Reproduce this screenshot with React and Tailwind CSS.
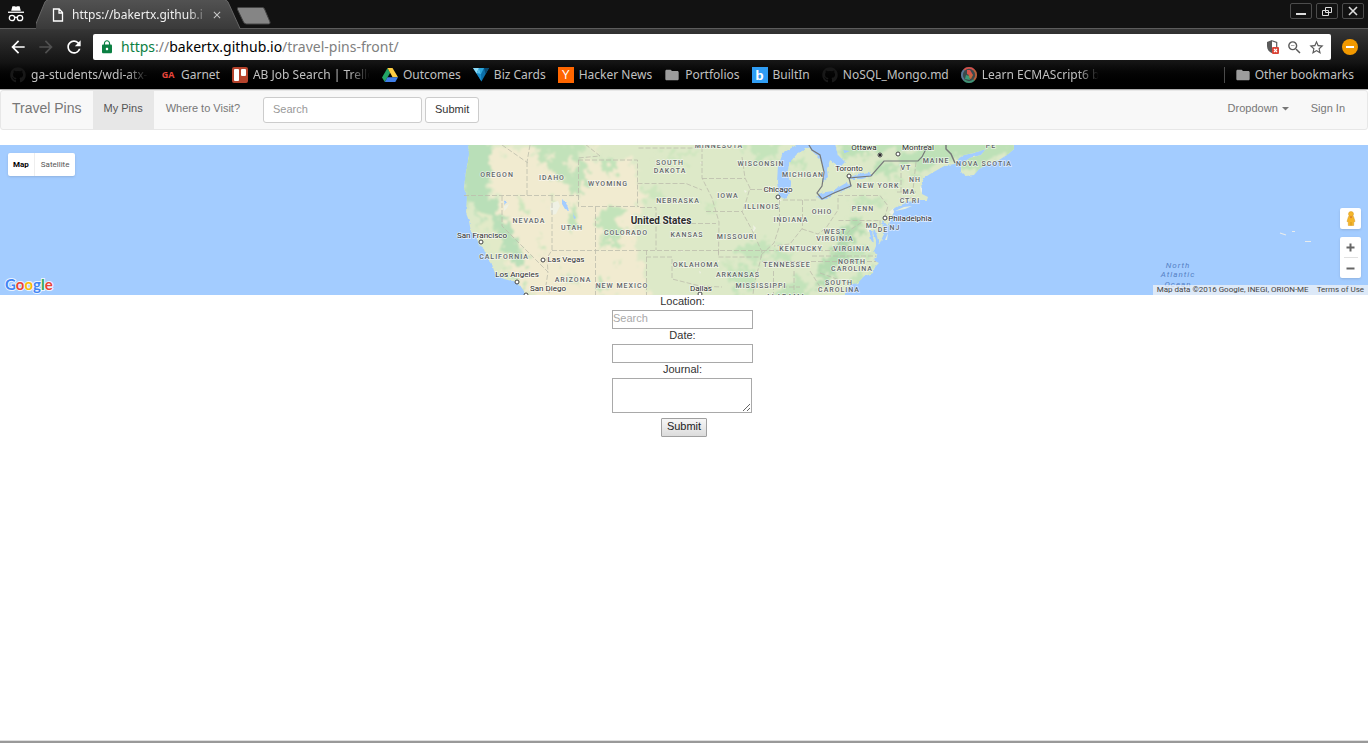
import React from "react";
import {
  MdArrowBack,
  MdArrowForward,
  MdRefresh,
  MdLock,
  MdStarBorder,
  MdZoomOut,
  MdFolder,
  MdClose,
} from "react-icons/md";
import { FaGithub } from "react-icons/fa";

/* ---------- browser icons ---------- */

function IncognitoIcon() {
  return (
    <svg viewBox="0 0 18 18" className="h-[18px] w-[18px]" aria-hidden="true">
      <path d="M5.4 1.2h2.3l1.3.6 1.3-.6h2.3l1.2 4.6H4.200z" fill="#fff" />
      <rect x="1" y="6.600" width="16" height="1.300" fill="#fff" />
      <g fill="none" stroke="#fff" strokeWidth="1.300">
        <circle cx="5" cy="13" r="2.700" />
        <circle cx="13" cy="13" r="2.700" />
        <path d="M7.700 12.600q1.300-.9 2.600 0" />
      </g>
    </svg>
  );
}

function PageIcon() {
  return (
    <svg viewBox="0 0 12 14" className="h-[14px] w-3 shrink-0" aria-hidden="true">
      <path d="M1.500 1h5.700l3.300 3.500V13h-9zM7 1v4h3.500" fill="none" stroke="#fff" strokeWidth="1.300" />
    </svg>
  );
}

function TrelloIcon() {
  return (
    <svg viewBox="0 0 16 16" className="h-4 w-4" aria-hidden="true">
      <rect width="16" height="16" rx="2" fill="#b5432c" />
      <rect x="2" y="2" width="5" height="12" rx="1" fill="#fff" />
      <rect x="9" y="2" width="5" height="7" rx="1" fill="#fff" />
    </svg>
  );
}

function DriveIcon() {
  return (
    <svg viewBox="0 0 16 16" className="h-4 w-4" aria-hidden="true">
      <path d="M5.500 1 0 10.500 2.800 15 8.200 5.700z" fill="#23a566" />
      <path d="M5.500 1h5L16 10.300h-5.400z" fill="#ffcd42" />
      <path d="M5.500 10.300H16L13.300 15H2.800z" fill="#3f7ee8" />
    </svg>
  );
}

function BizIcon() {
  return (
    <svg viewBox="0 0 16 16" className="h-4 w-4" aria-hidden="true">
      <path d="M0 1h16L8.500 14.500z" fill="#0b6ea8" />
      <path d="M0 1h6L3.500 6.500z" fill="#8fdcf8" />
      <path d="M6 1h5L8 7z" fill="#2ba6dc" />
      <path d="M6 1 3.500 6.500 8 7z" fill="#54c1ee" />
      <path d="M3.500 6.500 8 7l.5 7.500z" fill="#1c8fce" />
      <path d="M11 1h5l-3.500 6z" fill="#08486f" />
    </svg>
  );
}

function EcmaIcon() {
  return (
    <svg viewBox="0 0 16 16" className="h-4 w-4" aria-hidden="true">
      <circle cx="8" cy="8" r="7.900" fill="#3b4a4c" />
      <g fill="none" strokeWidth="1.800">
        <path d="M3 3a7 7 0 0 1 10 0" stroke="#d2504a" />
        <path d="M13 3a7 7 0 0 1 0 10" stroke="#b9603a" />
        <path d="M13 13a7 7 0 0 1-10 0" stroke="#3f9274" />
        <path d="M3 13A7 7 0 0 1 3 3" stroke="#5d7797" />
      </g>
      <path d="M6 3h3l3 5-2 1-4-2z" fill="#d8534b" />
      <path d="m8 7 4 1-2 4-3-1z" fill="#c4683d" />
      <path d="m5 8 3 1 1 4-5-1z" fill="#3c9a78" />
    </svg>
  );
}

function ShieldIcon() {
  return (
    <svg viewBox="0 0 16 16" className="h-4 w-4" aria-hidden="true">
      <path d="M7 1 2 3v4c0 3.500 2 6 5 7.200z" fill="#5a5a5a" />
      <path d="M7 1.700 11.700 3.500V8" fill="none" stroke="#5a5a5a" strokeWidth="1.200" />
      <rect x="7" y="8" width="7" height="7" rx="1" fill="#db4437" />
      <path d="m9 10 3 3m0-3-3 3" stroke="#fff" strokeWidth="1.100" />
    </svg>
  );
}

/* ---------- browser frame ---------- */

function WindowButton({ label, children }) {
  return (
    <button
      type="button"
      aria-label={label}
      className="flex h-4 w-[22px] items-center justify-center rounded-[2px] border border-[#4c4c4c]"
    >
      <svg viewBox="0 0 12 12" className="h-3 w-3" fill="none" stroke="#ddd" aria-hidden="true">
        {children}
      </svg>
    </button>
  );
}

function TabStrip() {
  return (
    <div className="flex h-7 items-start bg-[#121212]">
      <div className="flex h-7 w-9 items-center justify-center pr-1">
        <IncognitoIcon />
      </div>
      <div className="relative flex h-[29px] w-[205px] items-center gap-2 pr-[18px] pl-4">
        <svg viewBox="0 0 205 29" className="absolute inset-0 h-full w-full" aria-hidden="true">
          <defs>
            <linearGradient id="tab" x1="0" y1="0" x2="0" y2="1">
              <stop offset="0" stopColor="#525252" />
              <stop offset="1" stopColor="#3a3a3a" />
            </linearGradient>
          </defs>
          <path d="M-2 29 9 2q1-2 3-2h177q2 0 3 2l12 27z" fill="url(#tab)" />
          <path d="M-2 28.500 9 2q1-2 3-2M189 0q2 0 3 2l12 26.500" fill="none" stroke="#686868" />
        </svg>
        <span className="relative">
          <PageIcon />
        </span>
        <span className="relative w-[132px] overflow-hidden font-['Noto_Sans',sans-serif] text-xs whitespace-nowrap text-[#f0f0f0] [mask-image:linear-gradient(to_right,black_88%,rgba(0,0,0,.3))]">
          https://bakertx.github.io
        </span>
        <button type="button" aria-label="Close tab" className="relative">
          <MdClose className="h-3 w-3 text-[#c8c8c8]" />
        </button>
      </div>
      <button type="button" aria-label="New tab" className="mt-[7px] -ml-[5px]">
        <svg viewBox="0 0 36 18" className="h-[18px] w-9" aria-hidden="true">
          <path d="M2.500.5h24q1.500 0 2 1.500L34 15q.6 2-1.500 2h-22q-2 0-3-2L1.500 2.500q-.7-2 1-2z" fill="#858585" stroke="#444" />
        </svg>
      </button>
      <div className="mt-[3px] mr-1 ml-auto flex gap-1">
        <WindowButton label="Minimize">
          <path d="M1 9h10" strokeWidth="2" />
        </WindowButton>
        <WindowButton label="Restore">
          <path d="M4.500 2.500h6v5h-6zM1.500 5.500h6v5h-6z" />
        </WindowButton>
        <WindowButton label="Close">
          <path d="m2 2 8 8m0-8-8 8" strokeWidth="1.600" />
        </WindowButton>
      </div>
    </div>
  );
}

function AddressRow() {
  return (
    <div className="flex items-center pt-[5px] pr-[10px] pl-2">
      <div className="flex gap-2 pr-[9px] text-white">
        <button type="button" aria-label="Back">
          <MdArrowBack className="h-5 w-5" />
        </button>
        <button type="button" aria-label="Forward">
          <MdArrowForward className="h-5 w-5 text-[#505050]" />
        </button>
        <button type="button" aria-label="Reload">
          <MdRefresh className="h-5 w-5" />
        </button>
      </div>
      <div className="flex h-[26px] flex-1 items-center rounded-[2px] bg-white pr-[6px] pl-2">
        <MdLock className="mr-2 h-3 w-3 scale-125 text-[#0b8043]" />
        <div
          role="textbox"
          aria-label="Address"
          tabIndex={0}
          className="flex-1 font-['Noto_Sans',sans-serif] text-sm whitespace-nowrap text-[#808080]"
        >
          <span className="text-[#0b8043]">https</span>://<span className="text-black">bakertx.github.io</span>
          /travel-pins-front/
        </div>
        <div className="flex items-center gap-[5px] text-[#5a5a5a]">
          <ShieldIcon />
          <MdZoomOut className="h-[17px] w-[17px]" />
          <MdStarBorder className="h-[17px] w-[17px]" />
        </div>
      </div>
      <button
        type="button"
        aria-label="Menu"
        className="ml-[11px] flex h-4 w-4 items-center justify-center rounded-full bg-[#f29900]"
      >
        <span className="h-[2px] w-2 bg-white" />
      </button>
    </div>
  );
}

const github = <FaGithub className="h-4 w-4 text-[#181818]" />;
const folder = <MdFolder className="h-4 w-4 text-[#9c9c9c]" />;

const bookmarks = [
  { icon: github, name: "ga-students/wdi-atx-8", fade: true },
  {
    icon: <span className="font-['Open_Sans',sans-serif] text-[9px] font-bold text-[#e8463c]">GA</span>,
    name: "Garnet",
  },
  { icon: <TrelloIcon />, name: "AB Job Search | Trello", fade: true },
  { icon: <DriveIcon />, name: "Outcomes" },
  { icon: <BizIcon />, name: "Biz Cards" },
  {
    icon: (
      <span className="flex h-4 w-4 items-center justify-center bg-[#ff6600] font-['Liberation_Sans',sans-serif] text-xs text-white">
        Y
      </span>
    ),
    name: "Hacker News",
  },
  { icon: folder, name: "Portfolios" },
  {
    icon: (
      <span className="flex h-4 w-4 items-center justify-center bg-[#2f9df4] font-['Lato',sans-serif] text-sm leading-4 font-black text-white">
        b
      </span>
    ),
    name: "BuiltIn",
  },
  { icon: github, name: "NoSQL_Mongo.md" },
  { icon: <EcmaIcon />, name: "Learn ECMAScript6 by", fade: true },
];

function Bookmark({ icon, name, fade }) {
  return (
    <a href="#bookmark" className="flex shrink-0 items-center gap-[5px]">
      <span className="flex w-4 justify-center">{icon}</span>
      <span
        className={
          fade
            ? "w-[117px] overflow-hidden [mask-image:linear-gradient(to_right,black_82%,transparent)]"
            : ""
        }
      >
        {name}
      </span>
    </a>
  );
}

function BrowserFrame() {
  return (
    <header className="border-b border-[#b0b0b0]">
      <TabStrip />
      <div className="border-t border-[#5c5c5c] bg-linear-to-b from-[#363636] via-[#141414] via-55% to-black">
        <AddressRow />
        <div className="flex h-[29px] items-center gap-3 pr-[14px] pl-[10px] font-['Noto_Sans',sans-serif] text-xs whitespace-nowrap text-[#c0c0c0]">
          {bookmarks.map((b) => (
            <Bookmark key={b.name} {...b} />
          ))}
          <div className="ml-auto flex items-center gap-[10px]">
            <span className="h-4 w-px bg-[#4a4a4a]" />
            <a href="#other" className="flex items-center gap-1">
              {folder}
              Other bookmarks
            </a>
          </div>
        </div>
      </div>
    </header>
  );
}

/* ---------- page ---------- */

function Navbar() {
  return (
    <nav className="mb-[15px] flex h-10 items-stretch rounded-[3px] border border-[#e7e7e7] bg-[#f8f8f8] text-[#777]">
      <a href="#home" className="flex items-center px-[11px] pb-1 text-sm">
        Travel Pins
      </a>
      <a href="#pins" className="flex items-center bg-[#e7e7e7] px-[11px] pb-1 text-[#555]">
        My Pins
      </a>
      <a href="#visit" className="flex items-center px-3 pb-1">
        Where to Visit?
      </a>
      <form className="flex items-center gap-[3px] pl-[11px]" onSubmit={(e) => e.preventDefault()}>
        <input
          type="text"
          aria-label="Search"
          placeholder="Search"
          className="h-[26px] w-[159px] rounded-[3px] border border-[#ccc] bg-white px-[9px] pb-[2px] placeholder:text-[#999]"
        />
        <button type="submit" className="h-[26px] rounded-[3px] border border-[#ccc] bg-white px-[9px] pb-[2px] text-[#333]">
          Submit
        </button>
      </form>
      <div className="ml-auto flex pr-[11px]">
        <a href="#dropdown" className="flex items-center gap-1 px-[11px] pb-1">
          Dropdown
          <svg viewBox="0 0 7 4" className="mt-[2px] h-1 w-[7px]" aria-hidden="true">
            <path d="M0 0h7L3.500 3.500z" fill="#777" />
          </svg>
        </a>
        <a href="#signin" className="flex items-center px-[11px] pb-1">
          Sign In
        </a>
      </div>
    </nav>
  );
}

const states = [
  ["OREGON", 497, 177],
  ["IDAHO", 552, 180],
  ["WYOMING", 608, 186],
  ["NEVADA", 529, 223],
  ["UTAH", 572, 230],
  ["COLORADO", 626, 235],
  ["CALIFORNIA", 504, 259],
  ["ARIZONA", 573, 282],
  ["NEW MEXICO", 622, 288],
  ["MINNESOTA", 719, 148],
  ["SOUTH", 670, 165],
  ["DAKOTA", 670, 173],
  ["NEBRASKA", 678, 203],
  ["KANSAS", 687, 237],
  ["OKLAHOMA", 696, 267],
  ["IOWA", 728, 198],
  ["MISSOURI", 737, 239],
  ["ARKANSAS", 738, 277],
  ["WISCONSIN", 761, 166],
  ["ILLINOIS", 762, 209],
  ["MICHIGAN", 803, 177],
  ["INDIANA", 791, 222],
  ["OHIO", 822, 214],
  ["KENTUCKY", 801, 251],
  ["TENNESSEE", 787, 267],
  ["MISSISSIPPI", 761, 288],
  ["ALABAMA", 786, 299],
  ["WEST", 835, 234],
  ["VIRGINIA", 835, 241],
  ["VIRGINIA", 852, 251],
  ["NORTH", 852, 264],
  ["CAROLINA", 852, 271],
  ["SOUTH", 839, 285],
  ["CAROLINA", 839, 292],
  ["PENN", 863, 211],
  ["NEW YORK", 878, 188],
  ["VT", 906, 170],
  ["NH", 915, 182],
  ["MA", 909, 194],
  ["CT", 905, 203],
  ["RI", 916, 203],
  ["MD", 872, 228],
  ["DE", 883, 232],
  ["NJ", 895, 230],
  ["MAINE", 936, 163],
  ["NOVA SCOTIA", 984, 166],
  ["PE", 991, 148],
];

/* name, label x, label y, marker x, marker y */
const cities = [
  ["San Francisco", 482, 238, 481, 242],
  ["Las Vegas", 566, 262, 543, 260],
  ["Los Angeles", 517, 277, 517, 282],
  ["San Diego", 548, 291, 526, 295],
  ["Dallas", 701, 291, 700, 294],
  ["Chicago", 778, 192, 778, 197],
  ["Toronto", 849, 171, 849, 176],
  ["Ottawa", 864, 150, 880, 155],
  ["Montreal", 918, 150, 898, 154],
  ["Philadelphia", 910, 221, 885, 218],
];

const coast =
  "M468 140 469 155 466 172 464 188 467 197 466 213 469 221 471 232 477 238 479 246 484 249 486 256 492 264 495 274 504 279 512 281 520 285 524 291 527 300H845L847 288 852 284 858 283 863 277 873 273 875 267 879 263 873 260 877 256 874 251 876 246 876 240 873 232 874 228 877 236 879 245 883 236 886 229 883 223 888 226 891 219 894 212 893 209 898 206 909 202 918 200 927 200 928 197 922 194 922 188 921 184 924 178 930 174 939 169 946 165 955 164 959 158 964 155 973 153 980 151 986 149 981 155 970 158 961 164 961 171 966 176 974 175 979 169 988 164 999 160 1007 155 1014 149 1014 140Z";

function UsaMap() {
  return (
    <svg
      viewBox="0 145 1368 150"
      preserveAspectRatio="xMidYMid slice"
      className="h-[150px] w-full bg-[#a3ccff] font-['Roboto',sans-serif]"
      role="img"
      aria-label="Map of the United States"
    >
      <defs>
        <clipPath id="land">
          <path d={coast} />
        </clipPath>
        <filter id="rough" x="-10%" y="-10%" width="120%" height="120%">
          <feTurbulence type="fractalNoise" baseFrequency="0.13" numOctaves="4" seed="4" result="n" />
          <feDisplacementMap in="SourceGraphic" in2="n" scale="24" xChannelSelector="R" yChannelSelector="G" />
          <feGaussianBlur stdDeviation="0.800" />
        </filter>
        <filter id="edge" x="-5%" y="-5%" width="110%" height="110%">
          <feTurbulence type="fractalNoise" baseFrequency="0.25" numOctaves="2" seed="9" result="n" />
          <feDisplacementMap in="SourceGraphic" in2="n" scale="3" xChannelSelector="R" yChannelSelector="G" />
        </filter>
      </defs>
      <path d={coast} fill="#dde9c8" filter="url(#edge)" />
      <g clipPath="url(#land)">
        <g filter="url(#rough)">
          <path d="M490 152 530 149 545 165 560 178 575 170 582 158 600 160 635 160 640 205 632 228 636 250 650 300H535L520 285 505 262 490 230 500 200 485 175Z" fill="#f1ebd0" />
          <path d="M462 140H492L490 165 488 190 496 205 508 225 520 246 526 262 518 268 500 252 486 234 474 214 464 200Z" fill="#b9dfb8" />
          <path d="M478 210 490 214 502 240 512 258 504 264 488 246Z" fill="#e2eac8" />
          <path d="M530 140H590L578 152 584 166 588 182 578 198 566 184 552 172 540 160Z" fill="#c2e2ba" />
          <path d="M548 150 556 156 552 162ZM562 160 576 160 572 172ZM586 146 600 144 596 154Z" fill="#eaeacd" />
          <path d="M604 156 618 162 612 176 604 170ZM572 200 580 214 572 234 566 226ZM602 212 612 206 624 210 618 222 628 228 618 236 626 246 612 250 606 240 598 246 604 230 598 222ZM600 272 606 284 600 294 596 284ZM614 262 620 260 620 270ZM560 268 572 274 582 288 570 280ZM504 268 518 278 526 290 512 282Z" fill="#c3e3ba" />
          <path d="M540 232 544 245 540 255ZM520 192 525 210 519 216ZM548 196 556 202 550 206ZM640 190 660 186 662 196 642 200ZM655 158 700 150 690 160ZM720 260 736 262 730 276ZM700 200 716 206 708 214Z" fill="#cde6be" />
          <path d="M740 140H782L776 162 760 160 748 152ZM738 244 768 240 772 254 758 262 738 256ZM728 272 750 266 756 284 736 294ZM788 160 806 156 800 168 788 166Z" fill="#c5e4bb" />
          <path d="M812 292 822 272 820 262 834 250 838 234 848 224 860 220 864 230 852 244 846 260 836 272 826 282Z" fill="#b5dcb1" />
          <path d="M770 300 784 284 800 276 812 282 806 292 800 300Z" fill="#c3e3ba" />
          <path d="M848 248 872 246 866 260 852 262ZM776 248 794 254 784 262 772 260ZM852 276 870 270 862 282 850 290Z" fill="#c5e4bb" />
          <path d="M836 140H1014L1010 154 984 160 976 172 962 170 960 156 948 160 930 168 922 176 914 168 900 166 880 176 868 172 876 158 858 154 842 158Z" fill="#bee1b7" />
          <path d="M850 200 868 196 888 198 880 204 856 208ZM896 176 902 180 898 192ZM910 170 918 176 914 186Z" fill="#c7e4bc" />
          <path d="M868 152 900 150 914 148 898 162 876 162Z" fill="#dbe8c8" />
        </g>
        <g fill="#eff1e4">
          <path d="m551 203 7-2 2 5-4 8-4 1-2-6zM504 206l5-2-2 4-3 3zM744 190l3 1-2 2zM777 198l5 2-3 2zM753 225l3 3-2 3zM751 230l3-1 0 3zM699 271l2 1-1 2zM718 260l2 1-2 1zM889 212l5-4 2 2-4 5zM867 229l3-2 1 4-3 1zM920 186l3 3-2 4zM852 170l4 1-3 3zM680 250l3 0-1 2zM700 162l3 1-2 1z" />
        </g>
      </g>

      {/* lakes and bays */}
      <g fill="#a3ccff" filter="url(#edge)">
        <path d="M783 153 778 166 777 182 779 196 785 199 790 193 791 184 787 174 790 162 797 154 807 148 820 146 811 143 798 144Z" />
        <path d="M804 140 812 151 820 159 824 171 822 183 828 178 827 169 830 160 840 167 845 162 838 155 834 140Z" />
        <path d="M816 197 821 193 832 191 846 183 852 185 849 189 838 192 823 200Z" />
        <path d="M851 177 858 174 869 172 873 176 862 179 850 179Z" />
        <path d="m562 199 4 4 3 7-4-1-3-5z" />
        <path d="m869 230 3 0 2 14-3-4zM882 220l3 4-2 4zM843 150l2 3 5-2M573 214l3 4-2 1zM505 199l2 3-3 3z" />
      </g>
      <path d="m895 211 9-4 8-1-7 3zM887 240l1-7-3 7z" fill="#e8f0dc" />

      {/* state lines */}
      <g fill="none" stroke="#bdbcac" strokeWidth="0.800" strokeDasharray="5 2">
        <path d="M464 195.500H579M527 162V195M502 196V226L548 272 546 285 550 295M552 196V250L547 258 548 272M552 250.500H850M578.500 160V206.500H639M578 160H637.500V206M595.500 207V295M638.500 148H702M637.500 183.500H686L702 190M640 207.500H656V250M656 223.500H716M646.500 250V295M646 257H672V279L700 286 722 287M718.500 250V257H762M702 140V178L712 198 719 222 718.500 256M702 178.500H745M706 211.500H742L752 230 762 252 760 262 754 285 753 295M742 157 745 178 750 188 745 205 742 212M750 189.500H778M779.500 200V226L774 243 760 256M802.500 200V228L790 244 774 246M783 200H816M802 229 818 234 826 228 838 210V198M838.500 220.500H880M838 195.500H880L888 206 884 220M762 261.500H876M754 287H800M773.500 271V295M794 271V295M810 271 822 290M820 273 848 283M838 245 850 230 862 222M812 256H876M901 166V192M916 162 913 190M897 192H918M900 198H914M880 220V232M580 140 600 156 578 158M530 145 527 162M502 145 528 163" />
      </g>
      <g fill="none" stroke="#77797a" strokeWidth="1.200">
        <path d="M806 140 812 150 820 155 824 172 822 186 817 193 822 199 834 193 851 186 849 178 871 176 884 161H918L922 157 928 145" />
        <path d="M946 140V149L951 154 955 163" strokeWidth="1.500" />
      </g>

      <g className="text-[7px] font-medium tracking-[1px]" fill="#62666a" stroke="#fff" strokeOpacity="0.600" strokeWidth="1.500" paintOrder="stroke" textAnchor="middle">
        {states.map(([name, x, y]) => (
          <text key={name + x} x={x} y={y}>
            {name}
          </text>
        ))}
      </g>
      {cities.map(([name, , , x, y]) => (
        <g key={name}>
          <circle cx={x} cy={y} r="2" fill="#fff" stroke="#444" />
          {name === "Ottawa" && <circle cx={x} cy={y} r="1.200" fill="#222" />}
        </g>
      ))}
      <g className="text-[8px]" fill="#2c2c2c" stroke="#fff" strokeOpacity="0.700" strokeWidth="1.500" paintOrder="stroke" textAnchor="middle">
        {cities.map(([name, x, y]) => (
          <text key={name} x={x} y={y}>
            {name}
          </text>
        ))}
        <text x="661" y="224" className="text-[10px] font-bold">
          United States
        </text>
      </g>
      <g className="text-[8px] tracking-[1px] italic" fill="#5580c4" textAnchor="middle">
        <text x="1178" y="268">North</text>
        <text x="1178" y="277">Atlantic</text>
        <text x="1178" y="287">Ocean</text>
      </g>
      <path d="m1280 233 6 2M1292 231.500h3M1305 241.500h6" stroke="#e8ecec" strokeWidth="1.200" />
    </svg>
  );
}

function Pegman() {
  return (
    <svg viewBox="0 0 10 16" className="h-4 w-[10px]" aria-hidden="true">
      <circle cx="5" cy="3" r="2.500" fill="#f5b529" stroke="#d79a1e" strokeWidth="0.500" />
      <path d="M2.500 5.500h5L9 10.500l-1.300.3V14.500h-5.400v-3.700L1 10.500z" fill="#f5b529" stroke="#d79a1e" strokeWidth="0.500" />
      <path d="M3.500 5.500h3L5 7.500z" fill="#d8742a" />
      <path d="M5 11v3.500" stroke="#c98a16" strokeWidth="0.700" />
    </svg>
  );
}

function MapSection() {
  return (
    <section className="relative h-[150px] overflow-hidden font-['Roboto',sans-serif]">
      <UsaMap />
      <div className="absolute top-2 left-2 flex h-[23px] rounded-[2px] bg-white text-[8px] shadow-sm">
        <button type="button" className="border-r border-[#eee] px-[5px] font-bold text-black">
          Map
        </button>
        <button type="button" className="px-[6px] text-[#565656]">
          Satellite
        </button>
      </div>
      <a
        href="#google"
        className="absolute bottom-[3px] left-[5px] font-['Lato',sans-serif] text-[15px] leading-4 font-bold [paint-order:stroke] [-webkit-text-stroke:2px_#ffffffcc]"
      >
        <span className="text-[#4285f4]">G</span>
        <span className="text-[#ea4335]">o</span>
        <span className="text-[#fbbc05]">o</span>
        <span className="text-[#4285f4]">g</span>
        <span className="text-[#34a853]">l</span>
        <span className="text-[#ea4335]">e</span>
      </a>
      <div className="absolute right-[7px] bottom-[17px] flex w-[21px] flex-col gap-2">
        <button
          type="button"
          aria-label="Street View"
          className="flex h-[21px] items-center justify-center rounded-[2px] bg-white shadow-sm"
        >
          <Pegman />
        </button>
        <div className="flex h-[41px] flex-col items-center rounded-[2px] bg-white shadow-sm">
          <button type="button" aria-label="Zoom in" className="flex flex-1 items-center justify-center">
            <svg viewBox="0 0 9 9" className="h-[9px] w-[9px]" aria-hidden="true">
              <path d="M4.500.5v8M.5 4.500h8" stroke="#666" strokeWidth="2" />
            </svg>
          </button>
          <span className="h-px w-[14px] bg-[#e0e0e0]" />
          <button type="button" aria-label="Zoom out" className="flex flex-1 items-center justify-center">
            <svg viewBox="0 0 9 9" className="h-[9px] w-[9px]" aria-hidden="true">
              <path d="M.5 4.500h8" stroke="#666" strokeWidth="2" />
            </svg>
          </button>
        </div>
      </div>
      <div className="absolute right-0 bottom-0 flex h-[10px] items-center gap-2 bg-[#f5f5f5]/70 pr-1 pl-1 text-[8px] leading-[10px] text-[#444]">
        <span>Map data ©2016 Google, INEGI, ORION-ME</span>
        <a href="#terms">Terms of Use</a>
      </div>
    </section>
  );
}

function PinForm() {
  return (
    <form
      className="flex flex-col items-center leading-[15px] text-[#333]"
      onSubmit={(e) => e.preventDefault()}
    >
      <div className="flex flex-col items-center pr-[3px]">
        <label htmlFor="location" className="-mt-px mb-px">
          Location:
        </label>
        <input
          id="location"
          type="text"
          placeholder="Search"
          className="h-[19px] w-[141px] border border-[#a9a9a9] pb-1 placeholder:text-[#a9a9a9]"
        />
        <label htmlFor="date" className="-mt-px mb-px">
          Date:
        </label>
        <input id="date" type="text" className="h-[19px] w-[141px] border border-[#a9a9a9]" />
        <label htmlFor="journal" className="-mt-px mb-px">
          Journal:
        </label>
        <textarea id="journal" className="h-[35px] w-[140px] self-start border border-[#a9a9a9]" />
      </div>
      <button
        type="submit"
        className="mt-[5px] h-[19px] rounded-[1px] border border-[#a0a0a0] bg-linear-to-b from-[#f6f6f6] to-[#dcdcdc] px-[5px] pb-[2px] text-[#222]"
      >
        Submit
      </button>
    </form>
  );
}

export default function App() {
  return (
    <div className="flex min-h-screen flex-col bg-white">
      <BrowserFrame />
      <main className="flex-1 font-['Liberation_Sans',sans-serif] text-[11px]">
        <Navbar />
        <MapSection />
        <PinForm />
      </main>
      <footer className="h-[3px] border-t border-[#dedede] bg-[#999]" />
    </div>
  );
}
